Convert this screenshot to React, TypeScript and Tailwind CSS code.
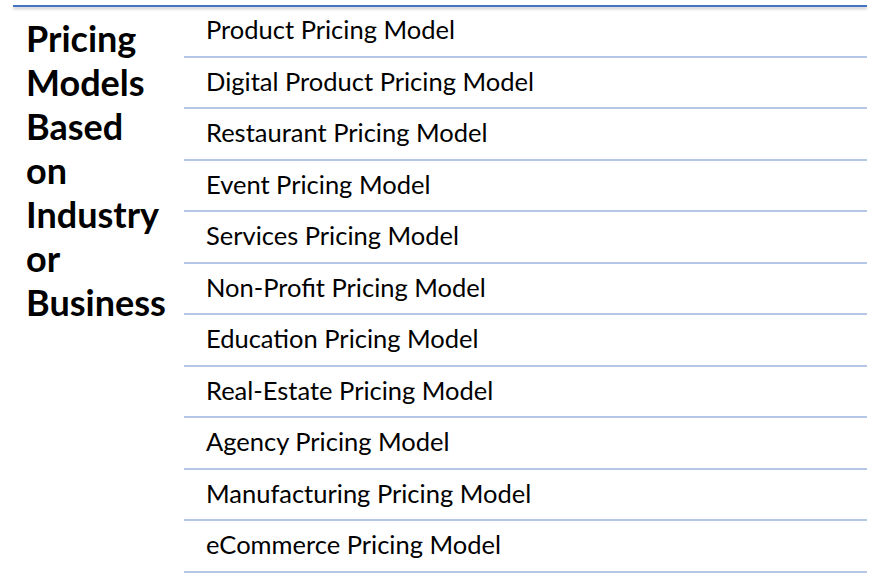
const items = ["Product Pricing Model","Digital Product Pricing Model","Restaurant Pricing Model","Event Pricing Model","Services Pricing Model","Non-Profit Pricing Model","Education Pricing Model","Real-Estate Pricing Model","Agency Pricing Model","Manufacturing Pricing Model","eCommerce Pricing Model"];
export default function App() {
  return (
    <div className="w-[874px] h-[580px] bg-white relative" style={{fontFamily: "Lato, 'Noto Sans', sans-serif"}}>
      <div className="absolute left-[13px] right-[7px] top-[5px] h-[2px] bg-[#4472c4] shadow-[0_2px_3px_rgba(0,0,0,0.25)]" />
      <div className="flex pt-[6px]">
        <div className="w-[184px] pl-[26px] pt-[10px] text-[36px] leading-[44px] font-bold text-black">
          Pricing<br/>Models<br/>Based<br/>on<br/>Industry<br/>or<br/>Business
        </div>
        <div className="w-[683px] flex flex-col">
          {items.map(t => (
            <div key={t} className="h-[51.5px] border-b-2 border-[#b4c7e7] flex items-center pl-[22px] pb-[3px] text-[25.5px] text-black">{t}</div>
          ))}
        </div>
      </div>
    </div>
  );
}
